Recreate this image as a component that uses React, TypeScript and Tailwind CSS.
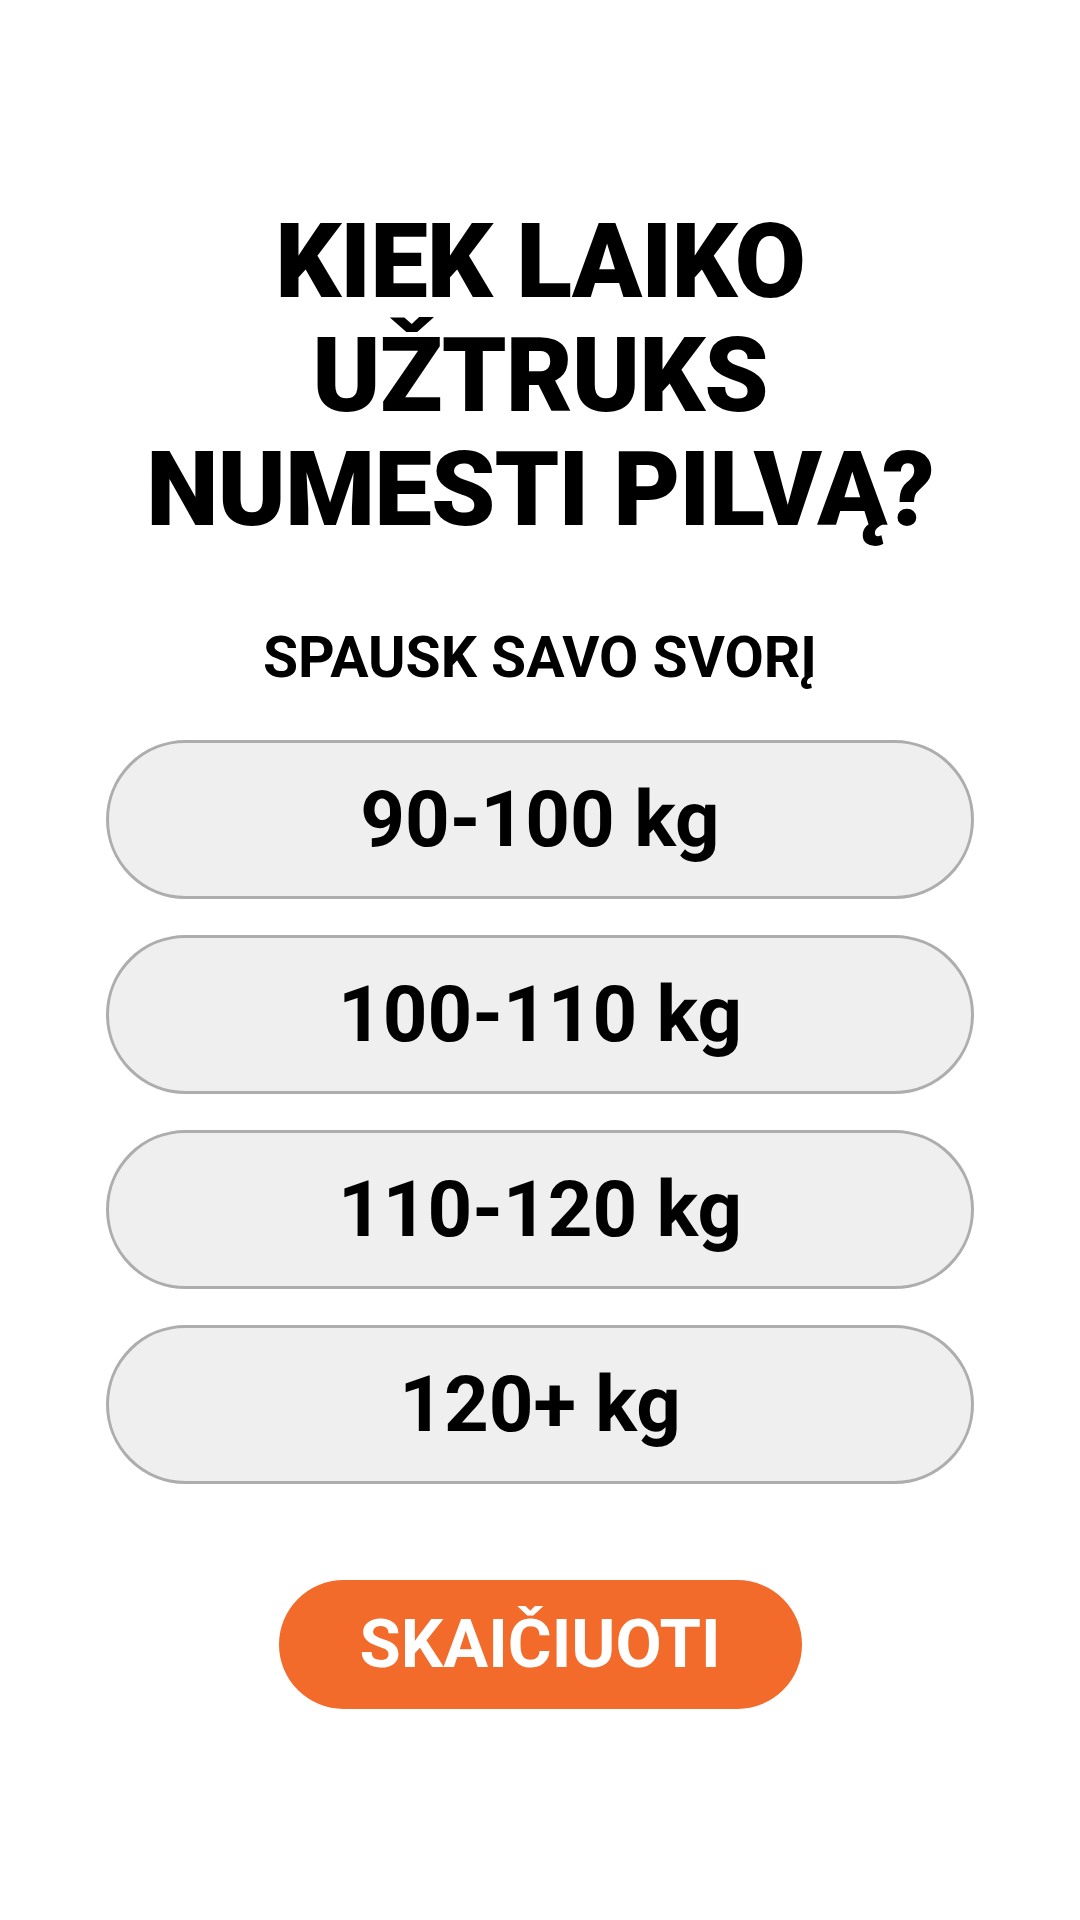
const options = ["90-100 kg", "100-110 kg", "110-120 kg", "120+ kg"];

export default function App() {
  return (
    <div
      className="w-[1080px] h-[1920px] bg-white flex flex-col items-center pt-[205px] text-black"
      style={{ fontFamily: "Roboto, 'Noto Sans', sans-serif" }}
    >
      <h1 className="text-center font-black text-[103px] leading-[114px] tracking-[-1px]">
        KIEK LAIKO
        <br />
        UŽTRUKS
        <br />
        NUMESTI PILVĄ?
      </h1>

      <div className="mt-[82px] font-bold text-[57px] leading-[58px]">SPAUSK SAVO SVORĮ</div>

      {/* weight choices */}
      <div className="mt-[53px] w-[868px] flex flex-col gap-[36px]">
        {options.map((o) => (
          <button
            key={o}
            className="h-[159px] w-full rounded-full border-[3px] border-[#adadad] bg-[#efefef] flex items-center justify-center font-bold text-[78px] leading-none"
          >
            {o}
          </button>
        ))}
      </div>

      <button className="mt-[96px] w-[523px] h-[129px] rounded-full bg-[#f26b2b] text-white font-bold text-[67px] leading-none flex items-center justify-center">
        SKAIČIUOTI
      </button>
    </div>
  );
}
